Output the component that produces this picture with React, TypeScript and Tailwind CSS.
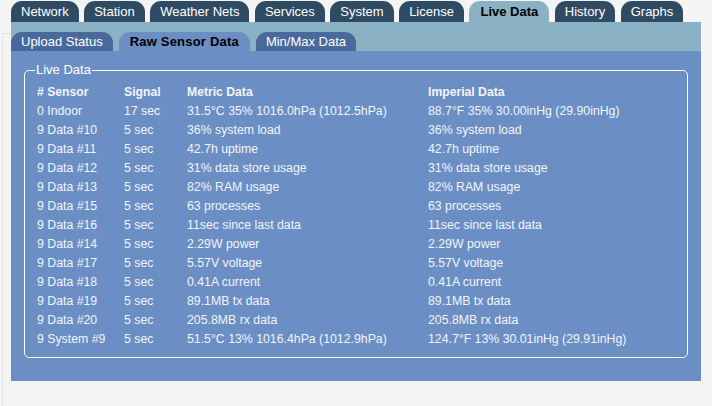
import React from "react";

const topTabs = [
  "Network",
  "Station",
  "Weather Nets",
  "Services",
  "System",
  "License",
  "Live Data",
  "History",
  "Graphs",
];

const subTabs = ["Upload Status", "Raw Sensor Data", "Min/Max Data"];

const rows: [string, string, string, string][] = [
  ["0 Indoor", "17 sec", "31.5°C 35% 1016.0hPa (1012.5hPa)", "88.7°F 35% 30.00inHg (29.90inHg)"],
  ["9 Data #10", "5 sec", "36% system load", "36% system load"],
  ["9 Data #11", "5 sec", "42.7h uptime", "42.7h uptime"],
  ["9 Data #12", "5 sec", "31% data store usage", "31% data store usage"],
  ["9 Data #13", "5 sec", "82% RAM usage", "82% RAM usage"],
  ["9 Data #15", "5 sec", "63 processes", "63 processes"],
  ["9 Data #16", "5 sec", "11sec since last data", "11sec since last data"],
  ["9 Data #14", "5 sec", "2.29W power", "2.29W power"],
  ["9 Data #17", "5 sec", "5.57V voltage", "5.57V voltage"],
  ["9 Data #18", "5 sec", "0.41A current", "0.41A current"],
  ["9 Data #19", "5 sec", "89.1MB tx data", "89.1MB tx data"],
  ["9 Data #20", "5 sec", "205.8MB rx data", "205.8MB rx data"],
  ["9 System #9", "5 sec", "51.5°C 13% 1016.4hPa (1012.9hPa)", "124.7°F 13% 30.01inHg (29.91inHg)"],
];

export default function App() {
  return (
    <div className="flex w-[712px] h-[406px] overflow-hidden bg-[#f4f4f4] font-['Liberation_Sans',Arial,sans-serif] text-[13px]">
      {/* left gutter */}
      <div className="w-[11px] shrink-0 pt-[33px]">
        <div className="h-full ml-[2px] border-l border-t border-[#e2e2e2]" />
      </div>

      <div className="w-[690px] shrink-0 flex flex-col">
        {/* top tabs */}
        <div className="flex gap-[5.5px] pt-[1px] h-[22px]">
          {topTabs.map((t) => {
            const active = t === "Live Data";
            return (
              <div
                key={t}
                className={
                  active
                    ? "h-[21px] px-[11px] rounded-t-[11px] bg-[#8ab2c4] text-black font-bold leading-[22px]"
                    : "h-[21px] px-[10px] rounded-t-[11px] bg-[#2f4b64] text-white leading-[22px]"
                }
              >
                {t}
              </div>
            );
          })}
        </div>

        {/* sub tab strip */}
        <div className="bg-[#8ab2c4] h-[29px] pt-[10px] flex gap-[6px]">
          {subTabs.map((t) => {
            const active = t === "Raw Sensor Data";
            return (
              <div
                key={t}
                className={
                  active
                    ? "h-[19px] px-[11px] rounded-t-[11px] bg-[#6b8fc4] text-black font-semibold leading-[20px] tracking-[0.2px]"
                    : "h-[19px] px-[10px] rounded-t-[11px] bg-[#48699a] text-white leading-[20px]"
                }
              >
                {t}
              </div>
            );
          })}
        </div>

        {/* panel */}
        <div className="bg-[#6b8fc4] h-[330px] pt-[12px] px-[13px]">
          <fieldset className="border border-white rounded-[5px] pl-[12px] pr-[10px] pb-[8px] h-[295px]">
            <legend className="text-white px-[1px] ml-[-2px] leading-[14px]">Live Data</legend>
            <table className="text-[#f2f5fb] border-collapse mt-[6px] text-[12.3px] leading-[19px]">
              <thead>
                <tr className="h-[19px] text-left">
                  <th className="w-[87px] p-0 font-bold text-[12.2px]">#&nbsp;Sensor</th>
                  <th className="w-[63px] p-0 font-bold text-[12.2px]">Signal</th>
                  <th className="w-[241px] p-0 font-bold text-[12.2px]">Metric Data</th>
                  <th className="p-0 font-bold text-[12.2px]">Imperial Data</th>
                </tr>
              </thead>
              <tbody>
                {rows.map((r) => (
                  <tr key={r[0]} className="h-[19px]">
                    {r.map((c, i) => (
                      <td key={i} className="p-0 whitespace-nowrap">
                        {c}
                      </td>
                    ))}
                  </tr>
                ))}
              </tbody>
            </table>
          </fieldset>
        </div>
      </div>
    </div>
  );
}
